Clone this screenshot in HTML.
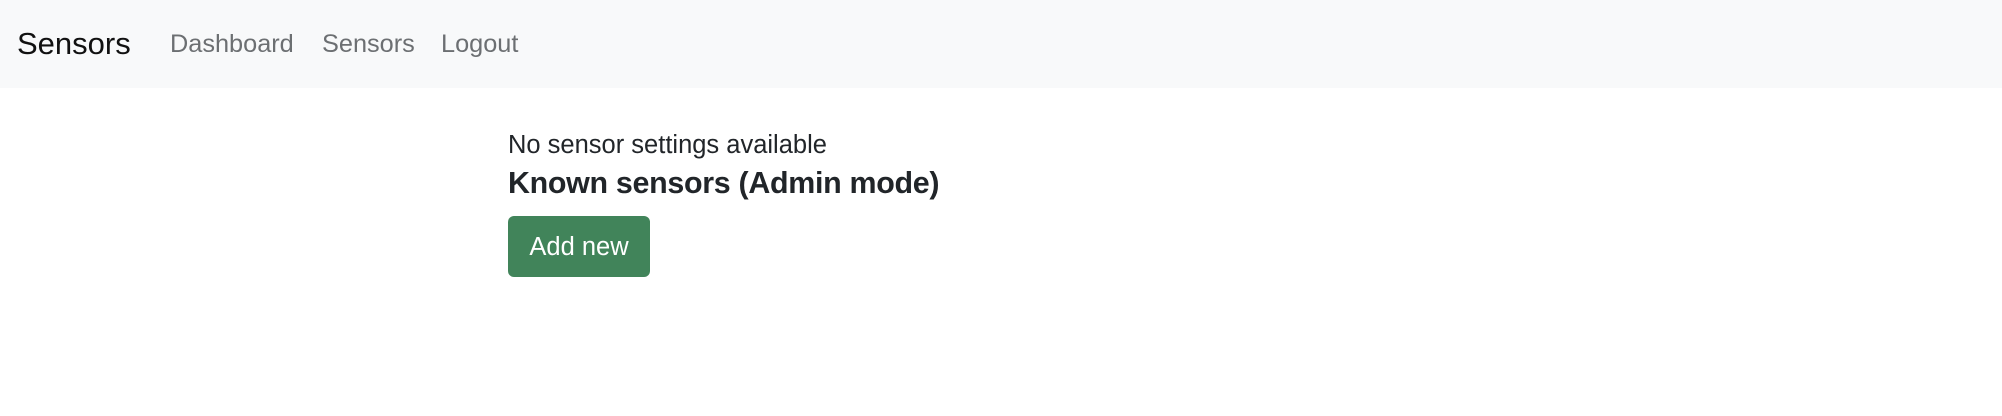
<!DOCTYPE html>
<html><head><meta charset="utf-8"><style>
*{margin:0;padding:0;box-sizing:border-box}
body{width:2002px;height:416px;background:#fff;font-family:"Liberation Sans",sans-serif;color:#212529;position:relative;overflow:hidden}
.nav{position:absolute;left:0;top:0;width:2002px;height:88px;background:#f8f9fa}
.t{position:absolute;white-space:nowrap;line-height:1}
.brand{left:17px;top:28px;font-size:31px;color:#111}
.link{top:32px;font-size:25.3px;color:#6c6f72}
.p{left:508px;top:133px;font-size:25.5px}
.h{left:508px;top:168px;font-size:30.4px;font-weight:bold;letter-spacing:-0.3px}
.btn{position:absolute;left:508px;top:216px;width:142px;height:61px;background:#41845a;border-radius:6px;color:#fff;font-size:25.5px;line-height:63px;text-align:center}
</style></head><body>
<div class="nav"></div>
<div class="t brand">Sensors</div>
<div class="t link" style="left:170px">Dashboard</div>
<div class="t link" style="left:322px">Sensors</div>
<div class="t link" style="left:441px">Logout</div>
<div class="t p">No sensor settings available</div>
<div class="t h">Known sensors (Admin mode)</div>
<div class="btn">Add new</div>
</body></html>
